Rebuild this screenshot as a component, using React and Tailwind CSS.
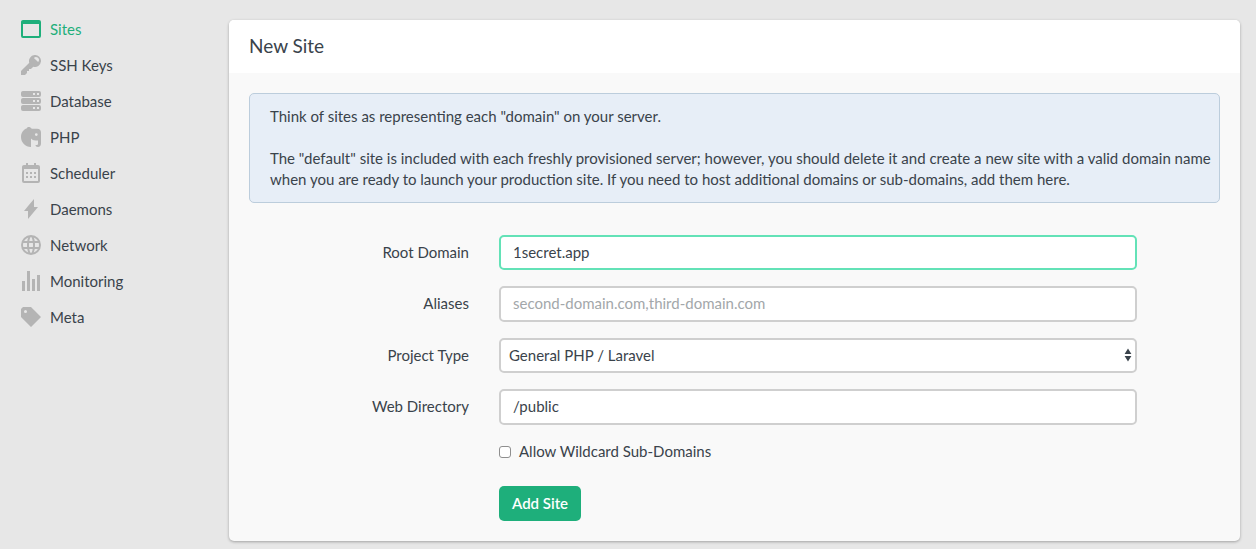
const Icon = ({ d }) => (
  <svg viewBox="0 0 20 20" className="size-5 shrink-0 fill-current" aria-hidden="true">
    <path fillRule="evenodd" d={d} />
  </svg>
);

const items = [
  { label: "Sites", active: true, d: "M0 3c0-1.1.9-2 2-2h16a2 2 0 0 1 2 2v14a2 2 0 0 1-2 2H2a2 2 0 0 1-2-2V3zm2 2v12h16V5H2z" },
  { label: "SSH Keys", d: "M12.26 11.74L10 14H8v2H6v2l-2 2H0v-4l8.26-8.26a6 6 0 1 1 4 4zm4.86-4.62A3 3 0 0 0 15 2a3 3 0 0 0-2.12.88l4.24 4.24z" },
  { label: "Database", d: "M0 2C0 .9.9 0 2 0h16a2 2 0 0 1 2 2v2a2 2 0 0 1-2 2H2a2 2 0 0 1-2-2V2zm0 7c0-1.1.9-2 2-2h16a2 2 0 0 1 2 2v2a2 2 0 0 1-2 2H2a2 2 0 0 1-2-2V9zm0 7c0-1.1.9-2 2-2h16a2 2 0 0 1 2 2v2a2 2 0 0 1-2 2H2a2 2 0 0 1-2-2v-2zM12 2v2h2V2h-2zm4 0v2h2V2h-2zm-4 7v2h2V9h-2zm4 0v2h2V9h-2zm-4 7v2h2v-2h-2zm4 0v2h2v-2h-2z" },
  { label: "PHP", d: "M7.5 0C9 0 10 .6 10.700 1.700H16A4 4 0 0 1 20 5.700V16.500C20 18.700 18.800 20 17 20C15.500 20 14.500 19.200 14.500 18H16C16.800 18 17 17.500 17 16.800V13.500H14.500C12.500 13.500 11 12.800 10 11.500V20C4.300 20 0 15.600 0 10C0 5.800 2.400 2.500 6 1.200C6.200 .5 6.700 0 7.500 0zM15.300 6.200a1.400 1.400 0 1 0 0 2.800 1.400 1.400 0 0 0 0-2.800z" },
  { label: "Scheduler", d: "M1 4c0-1.1.9-2 2-2h14a2 2 0 0 1 2 2v14a2 2 0 0 1-2 2H3a2 2 0 0 1-2-2V4zm2 2v12h14V6H3zm2-6h2v2H5V0zm8 0h2v2h-2V0zM5 9h2v2H5V9zm0 4h2v2H5v-2zm4-4h2v2H9V9zm0 4h2v2H9v-2zm4-4h2v2h-2V9zm0 4h2v2h-2v-2z" },
  { label: "Daemons", d: "M13 8V0L8.11 5.87 3 12h4v8L17 8h-4z" },
  { label: "Network", d: "M10 20a10 10 0 1 1 0-20 10 10 0 0 1 0 20zm7.75-8a8.01 8.01 0 0 0 0-4h-3.82a28.81 28.81 0 0 1 0 4h3.82zm-.82 2h-3.22a14.44 14.44 0 0 1-.95 3.51A8.03 8.03 0 0 0 16.93 14zm-8.85-2h3.84a24.61 24.61 0 0 0 0-4H8.08a24.61 24.61 0 0 0 0 4zm.25 2c.41 2.4 1.13 4 1.67 4s1.26-1.6 1.67-4H8.33zm-6.08-2h3.82a28.81 28.81 0 0 1 0-4H2.25a8.01 8.01 0 0 0 0 4zm.82 2a8.03 8.03 0 0 0 4.17 3.51c-.42-.96-.74-2.16-.95-3.51H3.07zm13.86-8a8.03 8.03 0 0 0-4.17-3.51c.42.96.74 2.16.95 3.51h3.22zm-8.6 0h3.34c-.41-2.4-1.13-4-1.67-4S8.74 3.6 8.33 6zM3.07 6h3.22c.2-1.35.53-2.55.95-3.51A8.03 8.03 0 0 0 3.07 6z" },
  { label: "Monitoring", d: "M1 10h3v10H1V10zM6 0h3v20H6V0zm5 8h3v12h-3V8zm5-4h3v16h-3V4z" },
  { label: "Meta", d: "M0 10V2l2-2h8l10 10-10 10L0 10zm4.5-4a1.5 1.5 0 1 0 0-3 1.5 1.5 0 0 0 0 3z" },
];

const field =
  "block w-full rounded-[5px] border-2 border-[#cfcfcf] bg-white px-3 pb-[2px] text-[#3a434b] placeholder-[#a3a7aa] outline-none focus:border-[#63e2b7]";

function Row({ label, id, children }) {
  return (
    <div className="flex items-center gap-[30px]">
      <label htmlFor={id} className="w-[220px] shrink-0 pb-[2px] text-right leading-5">
        {label}
      </label>
      <div className="min-w-0 flex-1">{children}</div>
    </div>
  );
}

export default function App() {
  return (
    <div className="flex min-h-screen items-start bg-[#e7e7e7] pr-4 font-['Lato',sans-serif] text-[15px] text-[#3a434b]">
      <nav className="w-[229px] shrink-0 pt-[11px] pl-[21px]">
        <ul>
          {items.map((it) => (
            <li key={it.label}>
              <a
                href={"#" + it.label}
                className={
                  it.active
                    ? "flex h-9 items-center gap-[9px] text-[#1eaf7b]"
                    : "flex h-9 items-center gap-[9px]"
                }
              >
                <span className={it.active ? "text-[#1eaf7b]" : "text-[#b4b4b4]"}>
                  <Icon d={it.d} />
                </span>
                {it.label}
              </a>
            </li>
          ))}
        </ul>
      </nav>

      <main className="mt-5 min-w-0 flex-1 rounded-[5px] bg-[#f9f9f9] shadow-[0_1px_3px_rgba(0,0,0,0.3)]">
        <h1 className="rounded-t-[5px] bg-white px-5 pt-3 pb-[14px] text-[19px] leading-[27px]">New Site</h1>
        <div className="p-5">
          <div className="rounded-[5px] border border-[#bccddc] bg-[#e7eef7] py-3 pr-1 pl-5 leading-[21px]">
            <p>Think of sites as representing each "domain" on your server.</p>
            <p className="mt-[21px]">
              The "default" site is included with each freshly provisioned server; however, you should delete it and
              create a new site with a valid domain name when you are ready to launch your production site. If you need
              to host additional domains or sub-domains, add them here.
            </p>
          </div>

          <form className="mt-8 mr-[83px] flex flex-col gap-4" onSubmit={(e) => e.preventDefault()}>
            <Row label="Root Domain" id="domain">
              <input id="domain" type="text" autoFocus defaultValue="1secret.app" className={field + " h-[35px]"} />
            </Row>
            <Row label="Aliases" id="aliases">
              <input
                id="aliases"
                type="text"
                placeholder="second-domain.com,third-domain.com"
                className={field + " h-9"}
              />
            </Row>
            <Row label="Project Type" id="type">
              <span className="relative block">
                <select
                  id="type"
                  className="block h-[35px] w-full appearance-none rounded-[5px] border-2 border-[#cfcfcf] bg-white px-2 text-[#3a434b] outline-none"
                >
                  <option>General PHP / Laravel</option>
                </select>
                <svg
                  viewBox="0 0 8 14"
                  className="pointer-events-none absolute top-[10px] right-[5px] h-[14px] w-2 fill-[#3a434b]"
                  aria-hidden="true"
                >
                  <path d="M4 .500l3.400 5.500H.6zM4 13.500l3.400-5.500H.6z" />
                </svg>
              </span>
            </Row>
            <Row label="Web Directory" id="directory">
              <input id="directory" type="text" defaultValue="/public" className={field + " h-9"} />
            </Row>
            <div className="ml-[250px]">
              <label className="flex items-center gap-2 leading-[21px]">
                <input
                  type="checkbox"
                  className="size-3 appearance-none rounded-[3px] border border-[#8f8f8f] bg-white checked:bg-[#1eaf7b]"
                />
                Allow Wildcard Sub-Domains
              </label>
              <button
                type="submit"
                className="mt-6 h-[35px] rounded-[5px] bg-[#1eaf7b] px-[13px] font-semibold text-white"
              >
                Add Site
              </button>
            </div>
          </form>
        </div>
      </main>
    </div>
  );
}
